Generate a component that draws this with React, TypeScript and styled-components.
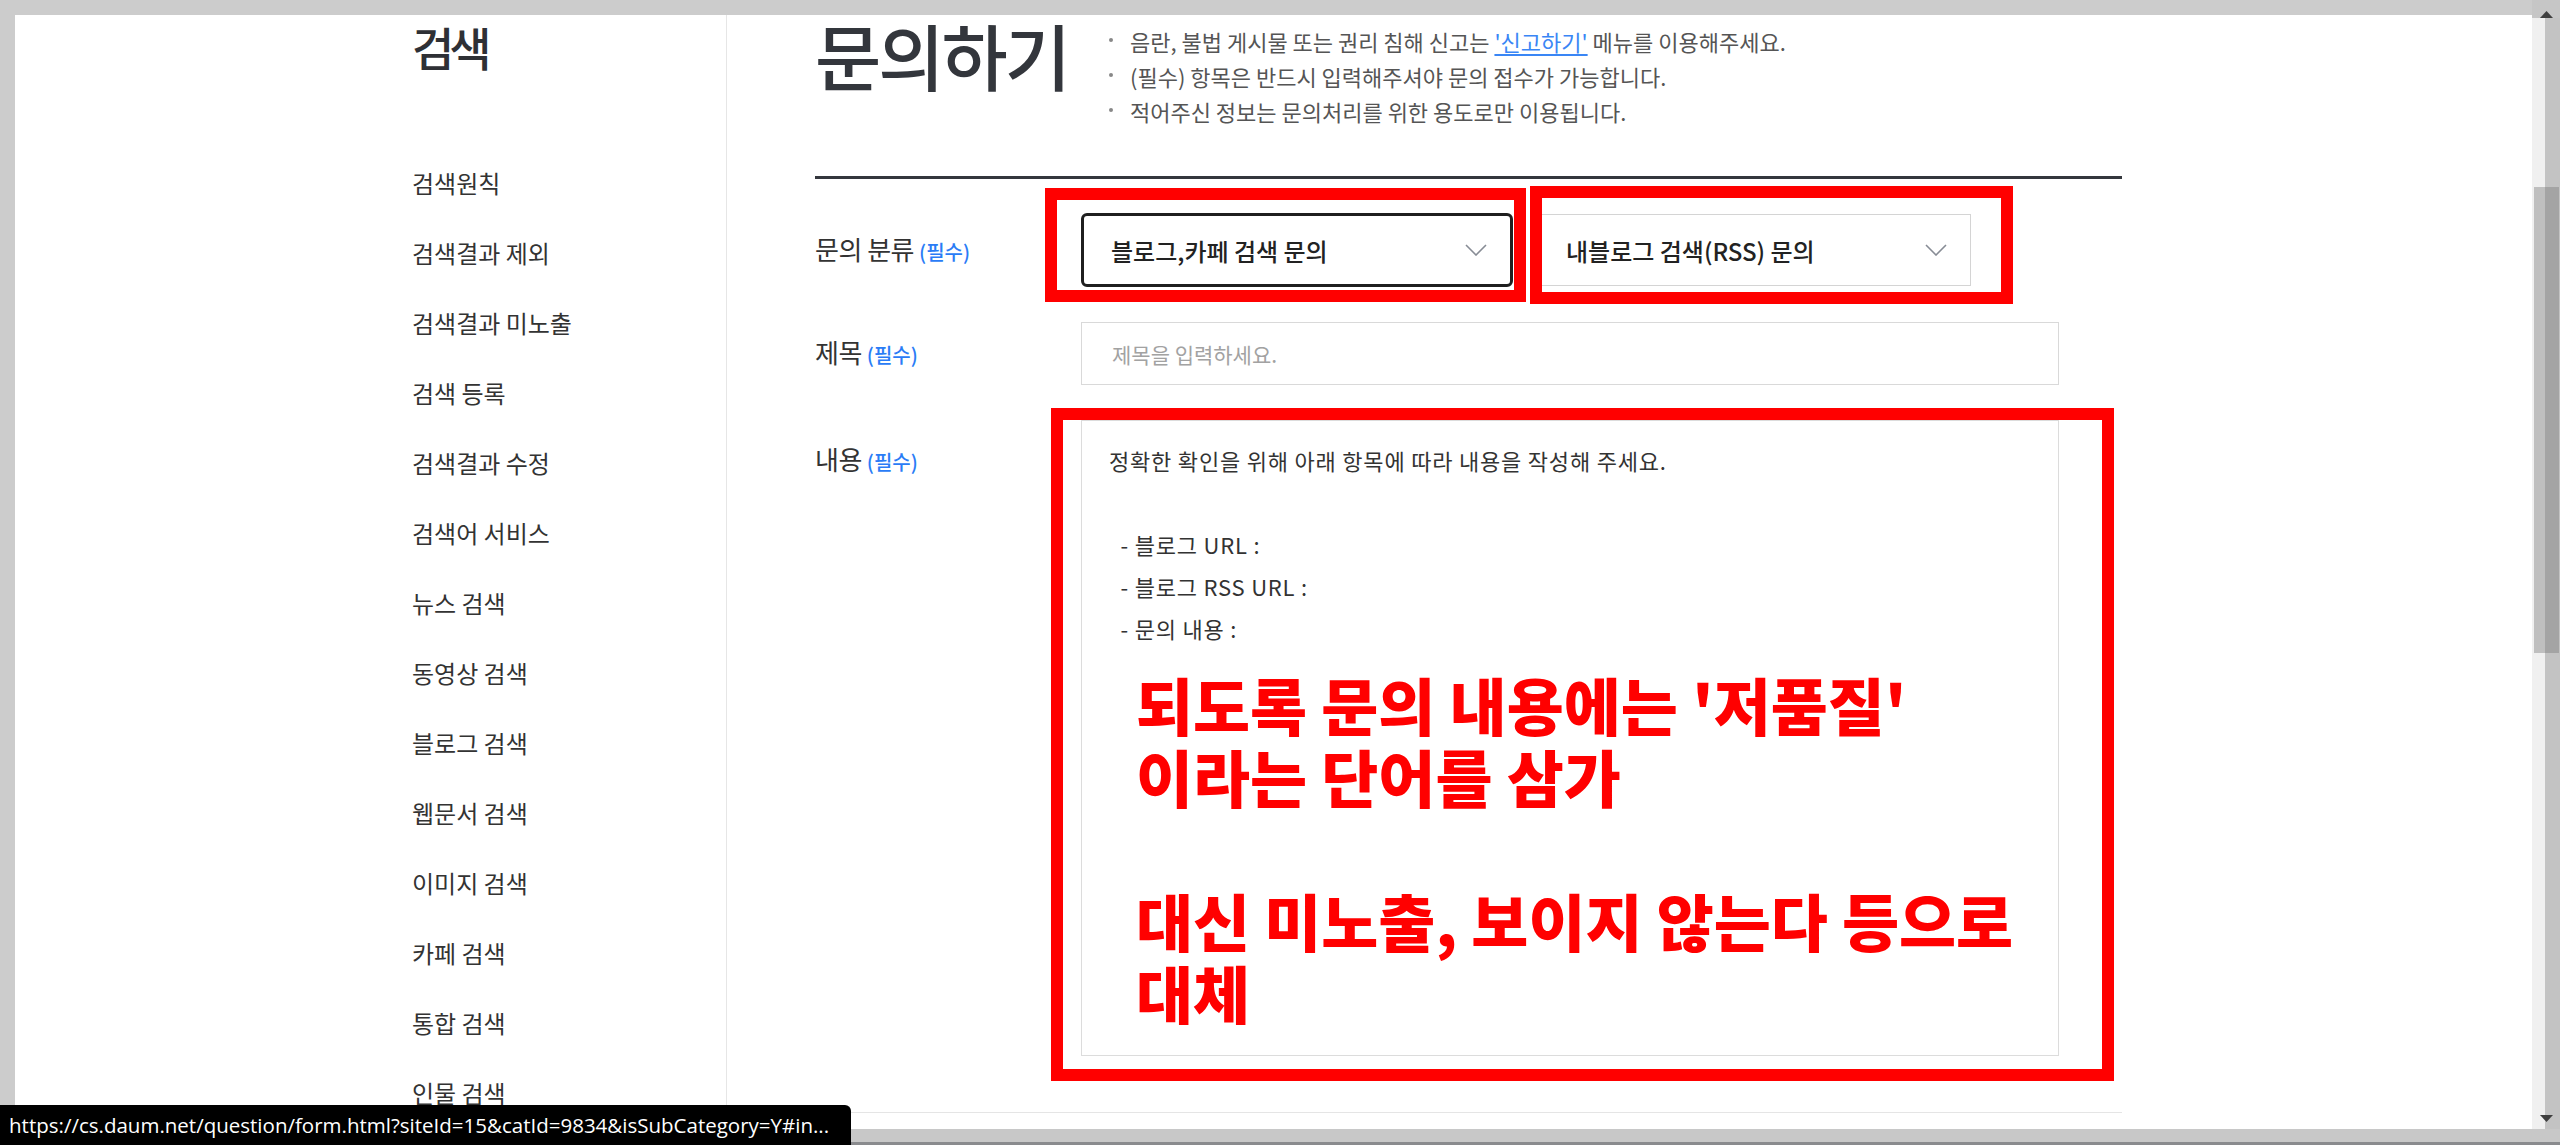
import React from 'react';
import styled, { createGlobalStyle } from 'styled-components';

const GlobalStyle = createGlobalStyle`
  html, body {
    margin: 0;
    padding: 0;
    background: #ccc;
  }
  body {
    font-family: 'Noto Sans CJK KR', 'Noto Sans', sans-serif;
    color: #333;
  }
  * {
    box-sizing: border-box;
  }
`;

const Page = styled.div`
  position: relative;
  width: 2560px;
  height: 1145px;
  display: flex;
  flex-direction: column;
  overflow: hidden;
  background: #ccc;
`;

const Body = styled.div`
  flex: 1;
  display: flex;
  min-height: 0;
  overflow: hidden;
`;

const LeftStrip = styled.div`
  width: 15px;
  flex-shrink: 0;
  background: #ccc;
`;

const Window = styled.div`
  flex: 1;
  display: flex;
  flex-direction: column;
  min-width: 0;
`;

const TopBar = styled.div`
  height: 15px;
  flex-shrink: 0;
  background: #ccc;
`;

const Viewport = styled.div`
  position: relative;
  flex: 1;
  display: flex;
  background: #fff;
`;

/* scrollbar on the right edge */
const ScrollRail = styled.div`
  position: relative;
  width: 28px;
  flex-shrink: 0;
  display: flex;
  flex-direction: column;
  background: linear-gradient(to right, #f0f0f0 0 13px, #c3c3c3 13px);
`;

const ScrollCap = styled.div<{ bottom?: boolean }>`
  height: ${(p) => (p.bottom ? '14px' : '18px')};
  display: flex;
  align-items: ${(p) => (p.bottom ? 'flex-start' : 'flex-end')};
  padding-left: 8px;
  background: ${(p) => (p.bottom ? 'transparent' : '#c6c6c6')};
  svg {
    display: block;
  }
`;

const ScrollTrack = styled.div`
  position: relative;
  flex: 1;
`;

const ScrollThumb = styled.div`
  position: absolute;
  left: 2px;
  width: 25px;
  background: linear-gradient(to right, #bfbfbf 0 11px, #a4a4a4 11px);
`;

const BottomBand = styled.div`
  height: 13px;
  flex-shrink: 0;
  background: #c8c8c8;
`;

const BottomEdge = styled.div`
  height: 3px;
  flex-shrink: 0;
  background: #8a8b8e;
`;

/* left navigation */
const Sidebar = styled.nav`
  width: 712px;
  flex-shrink: 0;
  padding: 8px 0 0 397px;
  border-right: 1px solid #e6e6e6;
`;

const SideTitle = styled.h2`
  margin: 0;
  font-size: 46px;
  line-height: 46px;
  font-weight: 500;
  letter-spacing: -5px;
  color: #2e3035;
`;

const SideMenu = styled.ul`
  list-style: none;
  margin: 79px 0 0;
  padding: 0;
`;

const SideItem = styled.li`
  height: 70px;
  line-height: 70px;
  font-size: 24px;
  color: #333;
  white-space: nowrap;
`;

/* main column */
const Main = styled.main`
  width: 1395px;
  flex-shrink: 0;
  display: flex;
  flex-direction: column;
`;

const Content = styled.div`
  padding-left: 88px;
`;

const Header = styled.header`
  display: flex;
  align-items: flex-start;
  height: 164px;
  padding-top: 3px;
  border-bottom: 3px solid #34373d;
`;

const Heading = styled.h1`
  margin: 0;
  font-size: 72px;
  line-height: 72px;
  font-weight: 500;
  letter-spacing: -3px;
  color: #33363c;
  white-space: nowrap;
`;

const Notices = styled.ul`
  list-style: none;
  margin: 6px 0 0 41px;
  padding: 0;
`;

const Notice = styled.li`
  position: relative;
  padding-left: 21px;
  font-size: 22px;
  line-height: 35px;
  color: #555;
  white-space: nowrap;
  &::before {
    content: '';
    position: absolute;
    left: 0;
    top: 14px;
    width: 4px;
    height: 4px;
    border-radius: 50%;
    background: #888;
  }
`;

const NoticeLink = styled.a`
  color: #3a86f5;
  text-decoration: underline;
  text-underline-offset: 3px;
`;

const Form = styled.form`
  display: flex;
  flex-direction: column;
  gap: 35px;
  padding-top: 34px;
`;

const Row = styled.div<{ alignTop?: boolean }>`
  display: flex;
  align-items: ${(p) => (p.alignTop ? 'flex-start' : 'center')};
`;

const Label = styled.label<{ offset?: number }>`
  width: 266px;
  flex-shrink: 0;
  padding-top: ${(p) => p.offset ?? 0}px;
  font-size: 26px;
  line-height: 34px;
  letter-spacing: -0.5px;
  color: #333;
  white-space: nowrap;
`;

const Required = styled.span`
  margin-left: 5px;
  font-size: 20px;
  font-weight: 500;
  letter-spacing: 0;
  color: #2a7cf6;
`;

const SelectGroup = styled.div`
  display: flex;
  align-items: center;
  gap: 26px;
`;

const Select = styled.div<{ focused?: boolean }>`
  width: 432px;
  height: ${(p) => (p.focused ? '74px' : '72px')};
  display: flex;
  align-items: center;
  justify-content: space-between;
  padding: 0 23px 0 ${(p) => (p.focused ? '27px' : '26px')};
  border: ${(p) => (p.focused ? '3px solid #1f1f1f' : '1px solid #d4d4d4')};
  border-radius: ${(p) => (p.focused ? '6px' : '0')};
  font-size: 24px;
  font-weight: 500;
  color: #222;
  background: #fff;
`;

const TextInput = styled.input`
  width: 978px;
  height: 63px;
  padding: 0 0 0 30px;
  border: 1px solid #d9d9d9;
  font-family: inherit;
  font-size: 21px;
  color: #333;
  outline: none;
  &::placeholder {
    color: #a2a2a2;
  }
`;

const TextBox = styled.div`
  width: 978px;
  height: 636px;
  padding: 18px 27px;
  border: 1px solid #dcdcdc;
  font-size: 22px;
  line-height: 42px;
  letter-spacing: 0.8px;
  color: #333;
  white-space: pre-wrap;
`;

const FooterRule = styled.div`
  height: 1px;
  margin-top: 56px;
  background: #e5e5e5;
`;

/* red annotation frames laid over the form */
const Highlight = styled.div`
  position: absolute;
  border: 12px solid #ff0000;
  pointer-events: none;
`;

const Annotation = styled.div`
  padding: 248px 0 0 73px;
  font-size: 62px;
  line-height: 72px;
  font-weight: 900;
  color: #ff0000;
  white-space: pre;
`;

const StatusBar = styled.div`
  position: absolute;
  left: 0;
  bottom: 0;
  width: 851px;
  height: 40px;
  padding-left: 9px;
  border-top-right-radius: 6px;
  background: #000;
  font-family: 'Open Sans', 'Noto Sans', sans-serif;
  font-size: 20.5px;
  line-height: 40px;
  color: #fff;
  white-space: nowrap;
  overflow: hidden;
`;

const Chevron: React.FC = () => (
  <svg width="22" height="12" viewBox="0 0 22 12" fill="none">
    <path d="M1 1 L11 11 L21 1" stroke="#878c95" strokeWidth="1.6" />
  </svg>
);

const Arrow: React.FC<{ down?: boolean }> = ({ down }) => (
  <svg width="13" height="7" viewBox="0 0 13 7">
    <path d={down ? 'M0 0 H13 L6.5 7 Z' : 'M0 7 H13 L6.5 0 Z'} fill="#3f3f3f" />
  </svg>
);

const menu = [
  '검색원칙',
  '검색결과 제외',
  '검색결과 미노출',
  '검색 등록',
  '검색결과 수정',
  '검색어 서비스',
  '뉴스 검색',
  '동영상 검색',
  '블로그 검색',
  '웹문서 검색',
  '이미지 검색',
  '카페 검색',
  '통합 검색',
  '인물 검색',
];

const guide =
  '정확한 확인을 위해 아래 항목에 따라 내용을 작성해 주세요.\n\n  - 블로그 URL :\n  - 블로그 RSS URL :\n  - 문의 내용 :';

const note =
  "되도록 문의 내용에는 '저품질'\n이라는 단어를 삼가\n\n대신 미노출, 보이지 않는다 등으로\n대체";

const App: React.FC = () => {
  return (
    <>
      <GlobalStyle />
      <Page>
        <Body>
          <LeftStrip />
          <Window>
            <TopBar />
            <Viewport>
              <Sidebar>
                <SideTitle>검색</SideTitle>
                <SideMenu>
                  {menu.map((item) => (
                    <SideItem key={item}>{item}</SideItem>
                  ))}
                </SideMenu>
              </Sidebar>

              <Main>
                <Content>
                  <Header>
                    <Heading>문의하기</Heading>
                    <Notices>
                      <Notice>
                        음란, 불법 게시물 또는 권리 침해 신고는 <NoticeLink>'신고하기'</NoticeLink> 메뉴를
                        이용해주세요.
                      </Notice>
                      <Notice>(필수) 항목은 반드시 입력해주셔야 문의 접수가 가능합니다.</Notice>
                      <Notice>적어주신 정보는 문의처리를 위한 용도로만 이용됩니다.</Notice>
                    </Notices>
                  </Header>

                  <Form>
                    <Row>
                      <Label>
                        문의 분류<Required>(필수)</Required>
                      </Label>
                      <SelectGroup>
                        <Select focused>
                          블로그,카페 검색 문의
                          <Chevron />
                        </Select>
                        <Select>
                          내블로그 검색(RSS) 문의
                          <Chevron />
                        </Select>
                      </SelectGroup>
                    </Row>
                    <Row>
                      <Label>
                        제목<Required>(필수)</Required>
                      </Label>
                      <TextInput placeholder="제목을 입력하세요." />
                    </Row>
                    <Row alignTop>
                      <Label offset={22}>
                        내용<Required>(필수)</Required>
                      </Label>
                      <TextBox>{guide}</TextBox>
                    </Row>
                  </Form>
                </Content>
                <FooterRule />
              </Main>

              <Highlight style={{ left: 1030, top: 173, width: 481, height: 114 }} />
              <Highlight style={{ left: 1515, top: 171, width: 483, height: 118 }} />
              <Highlight style={{ left: 1036, top: 393, width: 1063, height: 673 }}>
                <Annotation>{note}</Annotation>
              </Highlight>
            </Viewport>
          </Window>
          <ScrollRail>
            <ScrollCap>
              <Arrow />
            </ScrollCap>
            <ScrollTrack>
              <ScrollThumb style={{ top: 169, height: 466 }} />
            </ScrollTrack>
            <ScrollCap bottom>
              <Arrow down />
            </ScrollCap>
          </ScrollRail>
        </Body>
        <BottomBand />
        <BottomEdge />
        <StatusBar>https://cs.daum.net/question/form.html?siteId=15&amp;catId=9834&amp;isSubCategory=Y#in...</StatusBar>
      </Page>
    </>
  );
};

export default App;
